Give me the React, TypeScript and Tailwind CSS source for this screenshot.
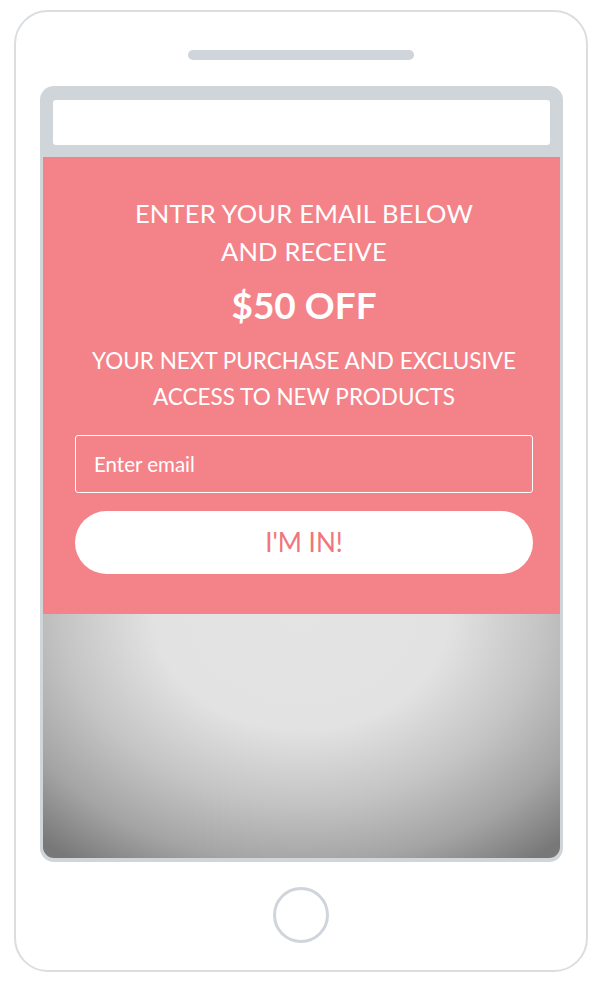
export default function App() {
  return (
    <div className="h-[984px] w-[600px] bg-white pl-[14px] pt-[10px] font-['Lato',sans-serif]">
      <div className="flex h-[962px] w-[574px] flex-col items-center rounded-[34px] border-2 border-[#dadee1]">
        <div className="mt-[38px] h-[10px] w-[226px] rounded-full bg-[#cfd5da]" />

        <div className="mt-[26px] flex h-[776px] w-[523px] flex-col rounded-[14px] bg-[#cfd5d9] px-[3px] pb-[4px] pt-[14px]">
          <div className="mx-[10px] h-[45px] rounded-[3px] bg-white" />

          <div className="mt-[12px] flex h-[457px] flex-col items-center bg-[#f48389] pl-[35px] pr-[29px] pt-[37px] text-white">
            <p className="text-center text-[25.5px] leading-[38px] tracking-[0.2px]">
              ENTER YOUR EMAIL BELOW
              <br />
              AND RECEIVE
            </p>
            <p className="mt-[14px] text-[37px] font-bold leading-[42px]">$50 OFF</p>
            <p className="mt-[17px] text-center text-[22.5px] leading-[36px]">
              YOUR NEXT PURCHASE AND EXCLUSIVE
              <br />
              ACCESS TO NEW PRODUCTS
            </p>

            <div className="mt-[20px] flex h-[58px] w-[458px] shrink-0 items-center rounded-[3px] border border-white px-[18px]">
              <span className="text-[20.5px]">Enter email</span>
            </div>
            <div className="mt-[18px] flex h-[63px] w-[458px] shrink-0 items-center justify-center rounded-full bg-white">
              <span className="text-[26px] text-[#f0757c]">I'M IN!</span>
            </div>
          </div>

          <div className="flex-1 rounded-b-[11px] bg-[radial-gradient(ellipse_75%_125%_at_50%_0%,#e4e4e4_0%,#e2e2e2_38%,#c4c4c4_62%,#a4a4a4_82%,#787878_100%)]" />
        </div>

        <div className="mt-[25px] h-[56px] w-[56px] rounded-full border-[3px] border-[#cfd5da]" />
      </div>
    </div>
  );
}
